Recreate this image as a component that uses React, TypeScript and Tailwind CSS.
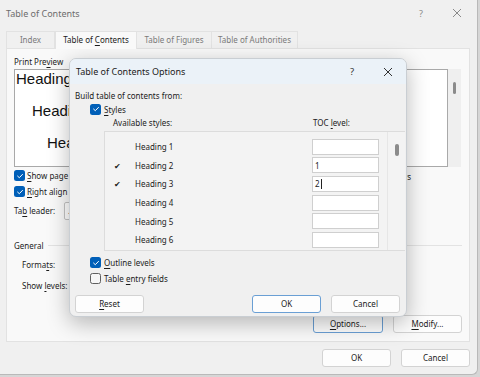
import React from "react";

const U = ({ children }: { children: React.ReactNode }) => (
  <span className="underline underline-offset-[1.5px] decoration-[0.5px]">{children}</span>
);

const Box = ({ checked }: { checked: boolean }) =>
  checked ? (
    <span className="w-[11px] h-[11px] shrink-0 rounded-[2.5px] bg-[#005fb8] flex items-center justify-center">
      <svg width="8" height="8" viewBox="0 0 8 8">
        <path d="M1.6 4.1 L3.3 5.7 L6.5 2.4" stroke="white" strokeWidth="1" fill="none" strokeLinecap="round" strokeLinejoin="round" />
      </svg>
    </span>
  ) : (
    <span className="w-[11px] h-[11px] shrink-0 rounded-[2.5px] border border-[#5f5f5f] bg-[#f6f6f6]" />
  );

const Btn = ({ children, w, primary }: { children: React.ReactNode; w: string; primary?: boolean }) => (
  <div
    className={`${w} h-[18px] rounded-[3px] border ${
      primary ? "border-[#6a9fd4]" : "border-[#d3d3d3]"
    } bg-[#fdfdfd] flex items-center justify-center text-[8px] leading-none text-[#1b1b1b]`}
  >
    {children}
  </div>
);

const CloseIcon = ({ color }: { color: string }) => (
  <svg width="10" height="10" viewBox="0 0 10 10">
    <path d="M1 1 L9 9 M9 1 L1 9" stroke={color} strokeWidth="1" fill="none" />
  </svg>
);

export default function App() {
  const rows = [
    { name: "Heading 1", mark: false, val: "" },
    { name: "Heading 2", mark: true, val: "1" },
    { name: "Heading 3", mark: true, val: "2" },
    { name: "Heading 4", mark: false, val: "" },
    { name: "Heading 5", mark: false, val: "" },
    { name: "Heading 6", mark: false, val: "" },
  ];
  return (
    <div className="w-[480px] h-[377px] bg-[#d6d6d6] relative overflow-hidden font-['Noto_Sans',sans-serif] text-[#1b1b1b]">
      {/* Outer dialog */}
      <div className="w-[478px] h-[375px] bg-[#f0f0f0] border-r border-b border-[#b9b9b9] rounded-br-[6px] flex flex-col">
        {/* title bar */}
        <div className="h-[26px] flex items-center pl-[6px] shrink-0">
          <span className="text-[9px] leading-none text-[#6d6d6d]">Table of Contents</span>
          <span className="ml-auto text-[9px] leading-none text-[#8a8a8a] w-[10px] text-center">?</span>
          <span className="ml-[26px] mr-[15px] flex items-center">
            <CloseIcon color="#8a8a8a" />
          </span>
        </div>
        {/* tabs */}
        <div className="mt-[5px] h-[17px] flex pl-[6px] shrink-0 text-[8px] leading-none">
          <div className="w-[49px] h-[17px] border border-b-0 border-[#e2e2e2] flex items-center justify-center text-[#7a7a7a]">Index</div>
          <div className="w-[82px] h-[18px] bg-[#f9f9f9] border border-b-0 border-[#e2e2e2] flex items-center justify-center text-[#1b1b1b] relative z-10 pb-[1px]">
            Table of&nbsp;<U>C</U>ontents
          </div>
          <div className="w-[75px] h-[17px] border border-b-0 border-l-0 border-[#e2e2e2] flex items-center justify-center text-[#7a7a7a]">Table of Figures</div>
          <div className="w-[86px] h-[17px] border border-b-0 border-l-0 border-[#e2e2e2] flex items-center justify-center text-[#7a7a7a]">Table of Authorities</div>
        </div>
        {/* panel */}
        <div className="ml-[6px] w-[464px] h-[294px] bg-[#f9f9f9] border border-[#e2e2e2] shrink-0 flex flex-col text-[8px] leading-[11px]">
          <div className="flex">
            {/* left column */}
            <div className="w-[235px] pl-[7px] flex flex-col">
              <div className="mt-[7px]">
                Print Pre<U>v</U>iew
              </div>
              <div className="mt-[1.5px] w-[212px] h-[98px] bg-white border border-[#a9a9a9] font-['Liberation_Sans',sans-serif] text-[15px] leading-none text-[#111] whitespace-nowrap">
                <div className="mt-[1.5px] ml-[1px]">Heading 1.......1</div>
                <div className="mt-[17px] ml-[17px]">Heading 2.....3</div>
                <div className="mt-[17px] ml-[32px]">Heading 3...5</div>
              </div>
              <div className="mt-[3.5px] flex items-center gap-[2px]">
                <Box checked />
                <span>
                  <U>S</U>how page numbers
                </span>
              </div>
              <div className="mt-[5px] flex items-center gap-[2px]">
                <Box checked />
                <span>
                  <U>R</U>ight align page numbers
                </span>
              </div>
              <div className="mt-[4.5px] flex items-center h-[18px]">
                <span className="w-[50px]">
                  Ta<U>b</U> leader:
                </span>
                <div className="w-[100px] h-[18px] bg-white border border-[#c4c4c4] rounded-[2px] flex items-center pl-[3px] text-[#444]">
                  ........
                </div>
              </div>
            </div>
            {/* right column */}
            <div className="w-[219px] flex flex-col">
              <div className="mt-[7px]">
                <U>W</U>eb Preview
              </div>
              <div className="mt-[1.5px] flex">
                <div className="w-[206px] h-[98px] bg-white border border-[#a9a9a9]" />
                <div className="w-[13px] h-[98px] bg-[#efefef] flex justify-center pt-[13px]">
                  <div className="w-[3px] h-[12px] rounded-[1.5px] bg-[#8b8b8b]" />
                </div>
              </div>
              <div className="mt-[4px] mr-[50px] flex justify-end items-center gap-[2px] whitespace-nowrap">
                <Box checked />
                <span>
                  Use <U>h</U>yperlinks instead of page numbers
                </span>
              </div>
            </div>
          </div>
          {/* General */}
          <div className="mt-[20px] pl-[7px] flex items-center">
            <span>General</span>
            <div className="ml-[4px] flex-1 mr-[7px] h-px bg-[#e3e3e3]" />
          </div>
          <div className="mt-[5px] pl-[15px] flex flex-col gap-[3px]">
            <div className="h-[18px] flex items-center">
              <span className="w-[60px]">
                Forma<U>t</U>s:
              </span>
              <div className="w-[110px] h-[18px] bg-white border border-[#c4c4c4] rounded-[2px] pl-[3px] flex items-center">From template</div>
            </div>
            <div className="h-[18px] flex items-center">
              <span className="w-[60px]">
                Show <U>l</U>evels:
              </span>
              <div className="w-[40px] h-[18px] bg-white border border-[#c4c4c4] rounded-[2px] pl-[3px] flex items-center">3</div>
            </div>
          </div>
          <div className="mt-[20px] flex justify-end gap-[10px] pr-[7px]">
            <Btn w="w-[70px]" primary>
              <U>O</U>ptions...
            </Btn>
            <Btn w="w-[69px]">
              <U>M</U>odify...
            </Btn>
          </div>
        </div>
        {/* bottom buttons */}
        <div className="mt-[7px] flex justify-end gap-[10px] pr-[7px]">
          <Btn w="w-[69px]">OK</Btn>
          <Btn w="w-[69px]">Cancel</Btn>
        </div>
      </div>

      {/* Modal: Table of Contents Options */}
      <div className="absolute left-[69px] top-[58px] w-[338px] h-[259px] rounded-[7px] border border-[#c9ced3] bg-[#f0f0f0] shadow-[0_6px_22px_rgba(0,0,0,0.28)] overflow-hidden flex flex-col text-[8px] leading-[11px]">
        <div className="h-[25px] shrink-0 bg-[#ebf2f8] flex items-center pl-[6px]">
          <span className="text-[9px] leading-none text-[#1b1b1b]">Table of Contents Options</span>
          <span className="ml-auto text-[9.5px] leading-none text-[#333] w-[10px] text-center">?</span>
          <span className="ml-[26px] mr-[13px] flex items-center">
            <CloseIcon color="#333" />
          </span>
        </div>
        <div className="pl-[5px] flex flex-col">
          <div className="mt-[5.5px]">Build table of contents from:</div>
          <div className="mt-[3px] ml-[15px] flex items-center gap-[3px]">
            <Box checked />
            <span>
              <U>S</U>tyles
            </span>
          </div>
          <div className="mt-[2px] flex">
            <span className="ml-[38px] w-[200px]">Available styles:</span>
            <span>
              TOC <U>l</U>evel:
            </span>
          </div>
          <div className="mt-[3.5px] ml-[29px] w-[301px] h-[120px] flex border border-r-0 border-[#dcdcdc] bg-[#f3f3f3]">
            <div className="w-[283px] flex flex-col pt-[5.5px] border-r border-[#e6e6e6]">
              {rows.map((r) => (
                <div key={r.name} className="h-[18.6px] flex items-center">
                  <span className="w-[30px] pl-[9px] text-[8px]">{r.mark ? "✔" : ""}</span>
                  <span className="w-[177px]">{r.name}</span>
                  <div className="w-[67px] h-[16px] bg-white border border-[#cfcfcf] flex items-center pl-[2px] text-[8px]">
                    {r.val}
                    {r.name === "Heading 3" && <span className="w-px h-[10px] bg-[#222] ml-[1px]" />}
                  </div>
                </div>
              ))}
            </div>
            <div className="flex-1 flex justify-center pt-[12px]">
              <div className="w-[4px] h-[12px] rounded-[2px] bg-[#8b8b8b]" />
            </div>
          </div>
          <div className="mt-[6px] ml-[15px] flex items-center gap-[3px]">
            <Box checked />
            <span>
              <U>O</U>utline levels
            </span>
          </div>
          <div className="mt-[5px] ml-[15px] flex items-center gap-[3px]">
            <Box checked={false} />
            <span>
              Table <U>e</U>ntry fields
            </span>
          </div>
          <div className="mt-[10.5px] flex">
            <Btn w="w-[69px]">
              <U>R</U>eset
            </Btn>
            <div className="ml-auto flex gap-[10px] mr-[6px]">
              <Btn w="w-[69px]" primary>
                OK
              </Btn>
              <Btn w="w-[69px]">Cancel</Btn>
            </div>
          </div>
        </div>
      </div>
    </div>
  );
}
